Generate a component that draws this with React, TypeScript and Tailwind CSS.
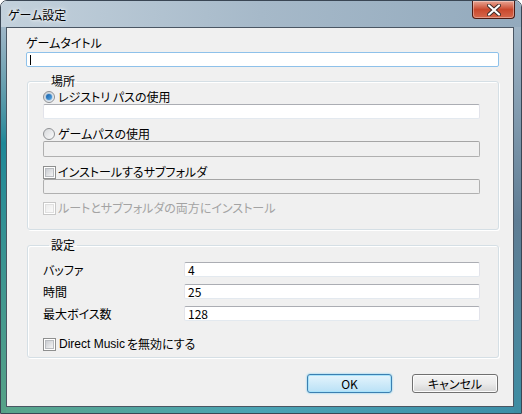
import React from 'react'

const FONT = "font-['Noto_Sans_CJK_JP','Noto_Sans',sans-serif] [font-feature-settings:'palt']"

function TextBox({ value, disabled, focused, caret, className = '' }: {
  value?: string
  disabled?: boolean
  focused?: boolean
  caret?: boolean
  className?: string
}) {
  const tone = focused
    ? 'border-[#8ec1ea] bg-white'
    : disabled
      ? 'border-[#b0b0b0] border-t-[#a5a5a5] bg-[#f0f0f0]'
      : 'border-[#e2e3ea] border-t-[#abadb3] border-b-[#e3e9ef] bg-white'
  return (
    <div className={`h-[15px] rounded-[2px] border flex items-center pl-[3px] text-[12px] leading-[13px] text-black ${tone} ${className}`}>
      {caret && <span className="w-px h-[10px] bg-black" />}
      {value}
    </div>
  )
}

function Radio({ checked }: { checked?: boolean }) {
  return (
    <span className="size-[12px] flex-none rounded-full border border-[#8f9194] bg-gradient-to-br from-[#d6d8db] to-[#fbfbfb] flex items-center justify-center">
      {checked && (
        <span className="size-[6px] rounded-full bg-gradient-to-br from-[#0c5da8] to-[#58a8e5] shadow-[0_0_2px_#2a7bc4]" />
      )}
    </span>
  )
}

function Check({ disabled }: { disabled?: boolean }) {
  return (
    <span
      className={`size-[13px] flex-none border flex items-center justify-center bg-white ${
        disabled ? 'border-[#c8c8c8]' : 'border-[#8e8f8f]'
      }`}
    >
      <span
        className={`size-[9px] border bg-gradient-to-br ${
          disabled
            ? 'border-[#e0e0e0] from-[#ececec] to-[#fafafa]'
            : 'border-[#b9bcc0] from-[#c9ccd1] to-[#f4f4f4]'
        }`}
      />
    </span>
  )
}

function Row({ children, className = '' }: { children: React.ReactNode; className?: string }) {
  return <div className={`h-[14px] flex items-center gap-[2px] text-[12px] leading-[14px] ${className}`}>{children}</div>
}

function Group({ title, className = '', children }: { title: string; className?: string; children: React.ReactNode }) {
  return (
    <fieldset className={`ml-px rounded-[3px] border border-[#d5dfe5] shadow-[inset_1px_1px_0_#fff,1px_1px_0_#fff] pl-[15px] pr-[18px] ${className}`}>
      <legend className="ml-[6px] px-[2px] text-[12px] leading-[14px]">{title}</legend>
      {children}
    </fieldset>
  )
}

const SETTINGS = [
  { label: 'バッファ', value: '4' },
  { label: '時間', value: '25' },
  { label: '最大ボイス数', value: '128' },
]

export default function App() {
  return (
    <div className={`w-[522px] h-[414px] ${FONT} text-black`}>
      <div className="w-full h-full flex flex-col rounded-t-[7px] border border-[#3a4654] overflow-hidden">
        {/* title bar */}
        <div className="h-[26px] flex-none flex items-start justify-between bg-linear-to-r from-[#c3d1dc] via-[#a6b9c9] to-[#93aabd]">
          <span className="ml-[7px] mt-[7px] text-[12px] leading-[14px] text-black [text-shadow:0_0_6px_#fff,0_0_3px_#fff]">
            ゲーム設定
          </span>
          <button className="mr-[6px] w-[43px] h-[18px] rounded-b-[4px] border border-t-0 border-[#4d1a12] bg-gradient-to-b from-[#e8a493] via-[#c9482d] to-[#d6674b] shadow-[inset_0_0_0_1px_rgba(255,255,255,0.35)] flex items-center justify-center">
            <svg viewBox="0 0 14 12" className="w-[14px] h-[12px]" aria-hidden>
              <path d="M2 1.5L12 10.5M12 1.5L2 10.5" stroke="#3a2a28" strokeWidth="4" strokeLinecap="round" />
              <path d="M2 1.5L12 10.5M12 1.5L2 10.5" stroke="#fff" strokeWidth="2.2" strokeLinecap="round" />
            </svg>
          </button>
        </div>

        <div className="flex-1 flex min-h-0">
          {/* left glass edge */}
          <div className="w-[5px] flex-none bg-linear-to-b from-[#9fb7c8] via-[#1d8898] via-30% to-[#56a287]" />

          <div className="flex-1 flex flex-col">
            {/* client area */}
            <div className="flex-1 border border-[#4a5663] bg-[#f0f0f0] pl-[19px] pr-[14px] flex flex-col">
              <div className="mt-[8px] text-[12px] leading-[14px]">ゲームタイトル</div>
              <TextBox focused caret className="mt-[2px]" />

              <Group title="場所" className="mt-[7px] pb-[14px]">
                <Row className="mt-[2px]">
                  <Radio checked />
                  <span className="ml-px">レジストリ パスの使用</span>
                </Row>
                <TextBox />
                <Row className="mt-[8px]">
                  <Radio />
                  <span className="ml-px">ゲームパスの使用</span>
                </Row>
                <TextBox disabled className="h-[16px]" />
                <Row className="mt-[8px]">
                  <Check />
                  <span>インストールするサブフォルダ</span>
                </Row>
                <TextBox disabled />
                <Row className="mt-[7px] text-[#a3a3a3]">
                  <Check disabled />
                  <span>ルートとサブフォルダの両方にインストール</span>
                </Row>
              </Group>

              <Group title="設定" className="mt-[8px] pb-[6px]">
                <div className="mt-[10px] flex flex-col gap-[7px]">
                  {SETTINGS.map(s => (
                    <div key={s.label} className="flex items-center text-[12px] leading-[14px]">
                      <span className="w-[141px] flex-none">{s.label}</span>
                      <TextBox value={s.value} className="flex-1" />
                    </div>
                  ))}
                </div>
                <Row className="mt-[16px]">
                  <Check />
                  <span className="ml-[1px] font-['Liberation_Sans','Noto_Sans_CJK_JP',sans-serif]">Direct Music</span>
                  <span>を無効にする</span>
                </Row>
              </Group>

              <div className="mt-[16px] flex justify-end gap-[20px] pr-px">
                <button className="w-[85px] h-[19px] rounded-[3px] border border-[#3c7fb1] bg-gradient-to-b from-[#e5f4fc] to-[#b9e1f6] shadow-[0_0_2px_#57c6f2,inset_0_0_0_1px_#a8e3fb] text-[12px] leading-[14px]">
                  OK
                </button>
                <button className="w-[86px] h-[19px] rounded-[3px] border border-[#707070] bg-gradient-to-b from-[#f4f4f4] via-[#ebebeb] to-[#d4d4d4] shadow-[inset_0_0_0_1px_#fcfcfc] text-[12px] leading-[14px]">
                  キャンセル
                </button>
              </div>
            </div>
            {/* bottom glass edge */}
            <div className="h-[6px] flex-none bg-linear-to-r from-[#58a58a] via-[#4aa3b4] to-[#3d8fa8]" />
          </div>

          {/* right glass edge */}
          <div className="w-[7px] flex-none bg-linear-to-b from-[#9fb4c5] via-[#5f7d94] to-[#3c8da3]" />
        </div>
      </div>
    </div>
  )
}
